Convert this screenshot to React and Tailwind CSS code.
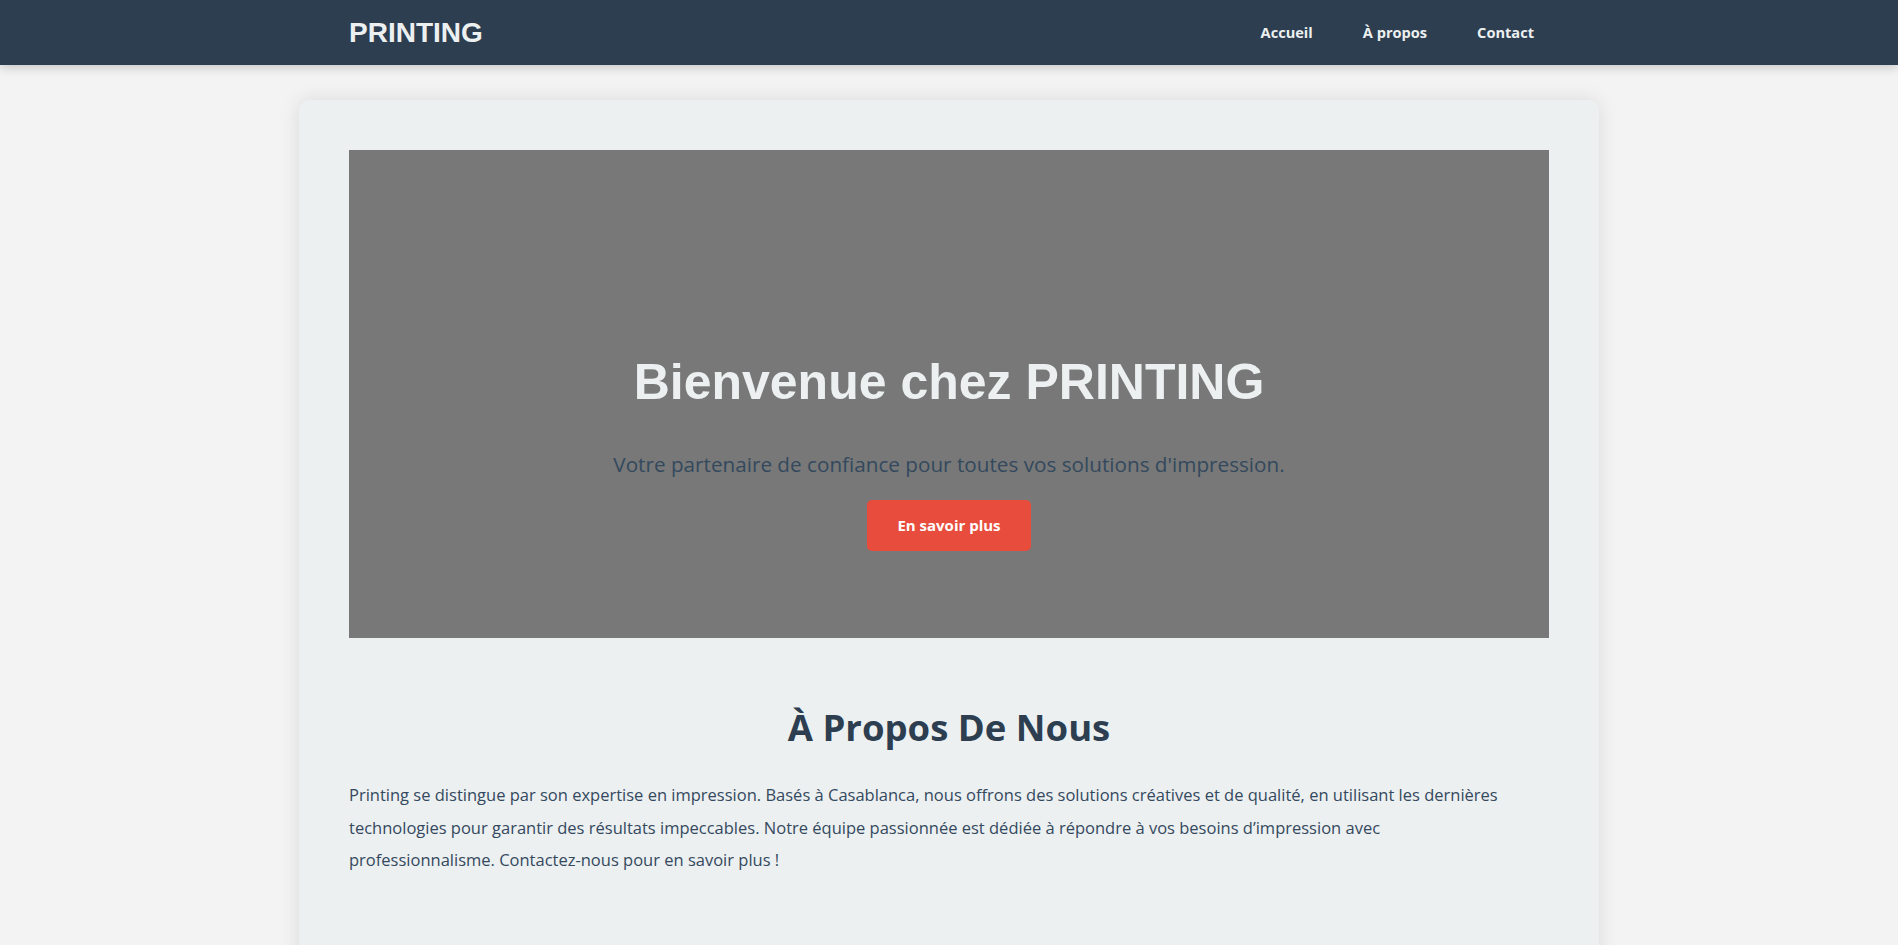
export default function App() {
  const sans = { fontFamily: '"Open Sans", "Noto Sans", sans-serif' };
  return (
    <div className="min-h-screen bg-[#f3f3f3] font-['Open_Sans',sans-serif]">
      {/* Header */}
      <header className="bg-[#2c3e50] shadow-[0_2px_10px_rgba(0,0,0,0.2)]">
        <div className="w-[1200px] mx-auto h-[65px] flex items-center justify-between">
          <div className="font-['Liberation_Sans',Arial,sans-serif] font-bold text-[28px] text-[#ecf0f1]">
            PRINTING
          </div>
          <nav className="flex items-center">
            {['Accueil', 'À propos', 'Contact'].map((item) => (
              <a
                key={item}
                href="#"
                className="ml-[20px] px-[15px] text-[14.6px] font-bold text-[#ecf0f1]"
              >
                {item}
              </a>
            ))}
          </nav>
        </div>
      </header>

      {/* Main card */}
      <main className="w-[1300px] mx-auto mt-[35px] bg-[#ecf0f1] rounded-[10px] shadow-[0_0_20px_rgba(0,0,0,0.1)] px-[50px] pt-[50px] pb-[120px]">
        {/* Hero */}
        <section className="h-[488px] bg-[#777877] pt-[204px] flex flex-col items-center">
          <h1 className="font-['Liberation_Sans',Arial,sans-serif] font-bold text-[50px] leading-[1.15] text-[#ecf0f1]">
            Bienvenue chez PRINTING
          </h1>
          <p className="mt-[39px] text-[20.7px] leading-[27px] text-[#34495e]" style={sans}>
            Votre partenaire de confiance pour toutes vos solutions d'impression.
          </p>
          <a
            href="#"
            className="mt-[22px] h-[51px] px-[30px] flex items-center rounded-[5px] bg-[#e74c3c] text-white text-[15px] font-bold"
          >
            En savoir plus
          </a>
        </section>

        {/* About */}
        <section className="pt-[68px]">
          <h2 className="text-center text-[36.5px] leading-[43px] font-bold text-[#2c3e50]">
            À Propos De Nous
          </h2>
          <p className="mt-[30px] text-[16.5px] leading-[32.5px] text-[#34495e]">
            Printing se distingue par son expertise en impression. Basés à Casablanca, nous offrons des solutions créatives et de qualité, en utilisant les dernières technologies pour garantir des résultats impeccables. Notre équipe passionnée est dédiée à répondre à vos besoins d’impression avec
            <br />
            professionnalisme. Contactez-nous pour en savoir plus !
          </p>
        </section>
      </main>
    </div>
  );
}
